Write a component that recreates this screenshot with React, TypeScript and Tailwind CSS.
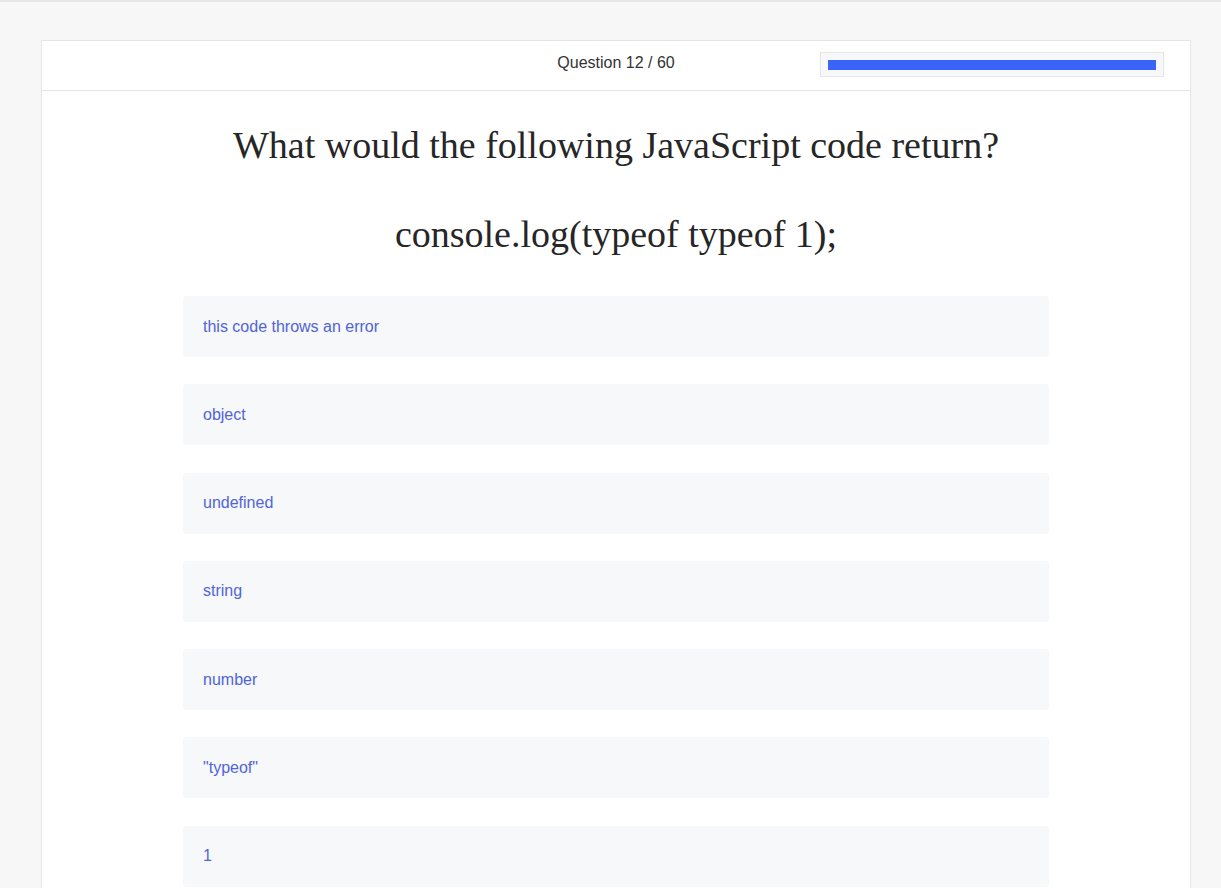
export default function App() {
  const options = [
    "this code throws an error",
    "object",
    "undefined",
    "string",
    "number",
    '"typeof"',
    "1",
  ];
  return (
    <div className="min-h-[888px] bg-[#f7f7f7] border-t-2 border-[#e6e6e6] pt-[38px] pl-[41px] pr-[30px] overflow-hidden">
      <div className="w-[1150px] bg-white border border-[#e5e5e5] min-h-[860px]">
        <div className="h-[50px] border-b border-[#e5e5e5] relative flex items-center justify-center">
          <span
            className="text-[16px] text-[#333] -mt-[6px]"
            style={{ fontFamily: '"Liberation Sans", Arial, sans-serif' }}
          >
            Question 12 / 60
          </span>
          <div className="absolute left-[778px] top-[11px] w-[344px] h-[25px] border border-[#e3e6ea] bg-[#f7f8fa] px-[7px] py-[7px]">
            <div className="h-[10px] w-full bg-[#3a63fa]" />
          </div>
        </div>
        <div
          className="text-center text-[#262626] text-[38px] leading-[44px] pt-[32px]"
          style={{ fontFamily: '"Liberation Serif", Georgia, serif' }}
        >
          <div>What would the following JavaScript code return?</div>
          <div className="mt-[45px]">console.log(typeof typeof 1);</div>
        </div>
        <div className="flex flex-col gap-[27.3px] mt-[40px] mx-auto w-[866px]">
          {options.map((o) => (
            <div
              key={o}
              className="h-[61px] rounded-[4px] bg-[#f7f8fa] flex items-center px-[20px] text-[16px] text-[#5064d8]"
              style={{ fontFamily: '"Liberation Sans", Arial, sans-serif' }}
            >
              {o}
            </div>
          ))}
        </div>
      </div>
    </div>
  );
}
